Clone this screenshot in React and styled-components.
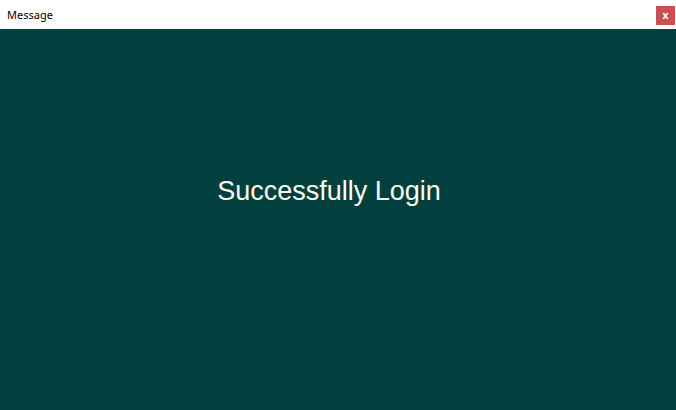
import styled, { createGlobalStyle } from 'styled-components';

const Global = createGlobalStyle`
  html, body {
    margin: 0;
    padding: 0;
    height: 100%;
    background: #024040;
  }
  #root {
    height: 100%;
  }
`;

const Window = styled.div`
  display: flex;
  flex-direction: column;
  width: 676px;
  height: 410px;
  font-family: "Liberation Sans", Arial, sans-serif;
`;

const TitleBar = styled.div`
  display: flex;
  align-items: center;
  justify-content: space-between;
  height: 29px;
  background: #ffffff;
  padding: 0 1px 0 7px;
  box-sizing: border-box;
`;

const Title = styled.span`
  font-family: "Noto Sans", "Open Sans", sans-serif;
  font-size: 11px;
  color: #000000;
  margin-top: -1px;
`;

const CloseButton = styled.button`
  width: 19px;
  height: 19px;
  margin-top: 1px;
  padding: 0;
  border: none;
  background: #c9504f;
  color: #ffffff;
  font-family: Verdana, "DejaVu Sans", sans-serif;
  font-size: 10px;
  font-weight: bold;
  line-height: 19px;
  text-align: center;
`;

const Body = styled.div`
  flex: 1;
  display: flex;
  justify-content: center;
  background: #024040;
  padding: 147px 18px 0 0;
`;

const Message = styled.div`
  font-size: 27px;
  color: #fffbea;
  line-height: 31px;
  height: 31px;
`;

export default function App() {
  return (
    <>
      <Global />
      <Window>
        <TitleBar>
          <Title>Message</Title>
          <CloseButton>x</CloseButton>
        </TitleBar>
        <Body>
          <Message>Successfully Login</Message>
        </Body>
      </Window>
    </>
  );
}
